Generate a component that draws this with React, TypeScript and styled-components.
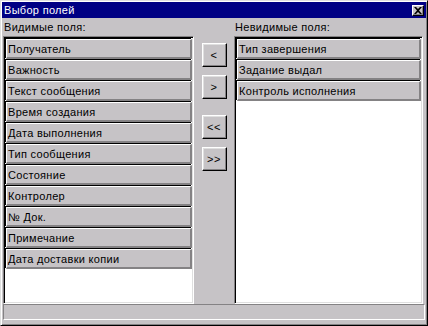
import React from 'react';
import styled, { createGlobalStyle } from 'styled-components';

const colors = {
  face: '#c6c3c6',
  light: '#dfdfdf',
  white: '#ffffff',
  shadow: '#848284',
  dark: '#000000',
  title: '#000084',
};

const GlobalStyle = createGlobalStyle`
  html, body {
    margin: 0;
    padding: 0;
    background: ${colors.face};
  }
  * {
    box-sizing: border-box;
  }
`;

const Window = styled.div`
  width: 428px;
  height: 326px;
  display: flex;
  flex-direction: column;
  padding: 1px;
  background: ${colors.face};
  border: 1px solid;
  border-color: ${colors.light} ${colors.dark} ${colors.dark} ${colors.light};
  box-shadow: inset 1px 1px ${colors.white}, inset -1px -1px ${colors.shadow};
  font-family: 'Liberation Sans', Arial, sans-serif;
  font-size: 11px;
  letter-spacing: 0.3px;
  color: #000;
`;

const TitleBar = styled.div`
  height: 16px;
  display: flex;
  align-items: center;
  justify-content: space-between;
  padding: 0 2px;
  background: ${colors.title};
  color: ${colors.white};
  line-height: 16px;
`;

const CloseButton = styled.div`
  width: 12px;
  height: 11px;
  display: flex;
  align-items: center;
  justify-content: center;
  background: ${colors.face};
  border: 1px solid;
  border-color: ${colors.white} ${colors.dark} ${colors.dark} ${colors.white};
  box-shadow: inset -1px -1px ${colors.shadow};
`;

const Body = styled.div`
  display: grid;
  grid-template-columns: 191px 40px 189px;
  grid-template-rows: 18px 268px;
  padding: 0 1px;
`;

const Label = styled.div`
  line-height: 18px;
  padding-left: 1px;
`;

const ListBox = styled.div`
  display: flex;
  flex-direction: column;
  gap: 1px;
  padding: 2px 1px 0 2px;
  background: ${colors.white};
  border: 1px solid;
  border-color: ${colors.shadow} ${colors.white} ${colors.white} ${colors.shadow};
  box-shadow: inset 1px 1px ${colors.dark}, inset -1px -1px ${colors.light};
`;

const Item = styled.div`
  height: 20px;
  flex: none;
  padding: 2px 0 0 1px;
  line-height: 15px;
  white-space: nowrap;
  overflow: hidden;
  background: ${colors.face};
  border-style: solid;
  border-width: 1px 2px 2px 1px;
  border-color: ${colors.white} ${colors.shadow} ${colors.shadow} ${colors.white};
  box-shadow: -1px -1px 0 ${colors.dark};
`;

const ButtonColumn = styled.div`
  display: flex;
  flex-direction: column;
  align-items: center;
  padding-top: 7px;
`;

const MoveButton = styled.div<{ $gap: number }>`
  width: 25px;
  height: 24px;
  margin-top: ${(p) => p.$gap}px;
  display: flex;
  align-items: center;
  justify-content: center;
  background: ${colors.face};
  border: 1px solid;
  border-color: ${colors.white} ${colors.dark} ${colors.dark} ${colors.white};
  box-shadow: inset -1px -1px ${colors.shadow}, inset 1px 1px ${colors.light};
  font-size: 11px;
  line-height: 1;
  letter-spacing: 0.5px;
`;

const StatusBar = styled.div`
  height: 16px;
  margin: 0 1px;
  border: 1px solid;
  border-color: ${colors.shadow} ${colors.white} ${colors.white} ${colors.shadow};
`;

const visible = [
  'Получатель',
  'Важность',
  'Текст сообщения',
  'Время создания',
  'Дата выполнения',
  'Тип сообщения',
  'Состояние',
  'Контролер',
  '№ Док.',
  'Примечание',
  'Дата доставки копии',
];

const hidden = ['Тип завершения', 'Задание выдал', 'Контроль исполнения'];

const buttons = [
  { label: '<', gap: 0 },
  { label: '>', gap: 8 },
  { label: '<<', gap: 16 },
  { label: '>>', gap: 8 },
];

const App: React.FC = () => (
  <>
    <GlobalStyle />
    <Window>
      <TitleBar>
        <span>Выбор полей</span>
        <CloseButton>
          <svg width="8" height="7" viewBox="0 0 8 7">
            <path d="M0 0h2l2 2 2-2h2L5 3.5 8 7H6L4 5 2 7H0l3-3.5z" fill="#000" />
          </svg>
        </CloseButton>
      </TitleBar>
      <Body>
        <Label>Видимые поля:</Label>
        <div />
        <Label>Невидимые поля:</Label>
        <ListBox>
          {visible.map((name) => (
            <Item key={name}>{name}</Item>
          ))}
        </ListBox>
        <ButtonColumn>
          {buttons.map((b) => (
            <MoveButton key={b.label} $gap={b.gap}>
              {b.label}
            </MoveButton>
          ))}
        </ButtonColumn>
        <ListBox>
          {hidden.map((name) => (
            <Item key={name}>{name}</Item>
          ))}
        </ListBox>
      </Body>
      <StatusBar />
    </Window>
  </>
);

export default App;
